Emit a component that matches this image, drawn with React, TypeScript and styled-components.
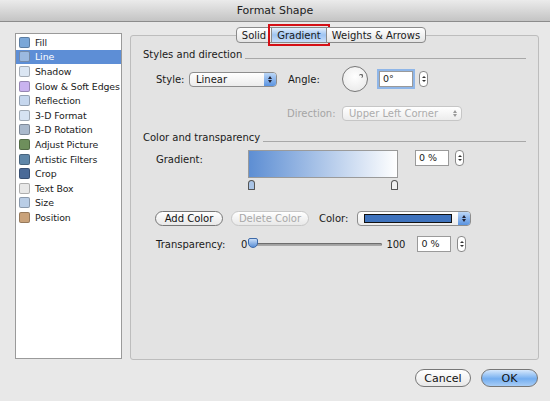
import React from "react";
import styled, { createGlobalStyle } from "styled-components";

const Global = createGlobalStyle`
  html, body { margin: 0; padding: 0; }
  body { width: 550px; height: 401px; overflow: hidden; background: #e8e8e8;
    font-family: "DejaVu Sans", "Liberation Sans", sans-serif; font-size: 10px; color: #1a1a1a; }
`;

const Window = styled.div`
  width: 550px; height: 401px; display: flex; flex-direction: column; background: #e8e8e8;
`;
const TitleBar = styled.div`
  height: 21px; flex: none; display: flex; align-items: center; justify-content: center;
  background: linear-gradient(#ebebeb, #c4c4c4); border-bottom: 1px solid #8c8c8c;
  font-size: 11px; color: #222;
`;
const Body = styled.div`
  display: flex; gap: 8px; padding: 11px 11px 0 15px; height: 327px;
`;
const Sidebar = styled.div`
  width: 107px; height: 326px; background: #fff; border: 1px solid #9a9a9a; padding-top: 1px;
  box-sizing: border-box; overflow: hidden;
`;
const Item = styled.div<{ $sel?: boolean }>`
  height: 14.6px; display: flex; align-items: center; gap: 5px; padding-left: 3px;
  font-size: 9.4px; letter-spacing: -0.1px;
  background: ${(p) => (p.$sel ? "#5d8ed6" : "transparent")};
  color: ${(p) => (p.$sel ? "#fff" : "#1a1a1a")}; white-space: nowrap;
`;
const Icon = styled.span<{ $c: string }>`
  width: 11px; height: 11px; flex: none; border-radius: 2px; background: ${(p) => p.$c};
  border: 1px solid rgba(0,0,0,0.25); box-sizing: border-box;
`;
const Right = styled.div`
  flex: 1; position: relative; padding-top: 1px;
`;
const Tabs = styled.div`
  position: absolute; top: -6px; left: 0; right: 0; display: flex; justify-content: center; z-index: 1;
  padding-right: 6px;
`;
const Tab = styled.div<{ $sel?: boolean }>`
  height: 14px; padding: 0 5px; display: flex; align-items: center;
  border: 1px solid #8a8a8a; margin-left: -1px;
  background: ${(p) => (p.$sel ? "linear-gradient(#e4effc, #9ec4f2 50%, #c9defa)" : "linear-gradient(#fff, #e4e4e4)")};
  outline: ${(p) => (p.$sel ? "2px solid #d40f16" : "none")};
  outline-offset: 1px;
  &:first-child { border-radius: 4px 0 0 4px; }
  &:last-child { border-radius: 0 4px 4px 0; }
`;
const Panel = styled.div`
  height: 325px; background: #e3e3e3; border: 1px solid #bdbdbd; border-radius: 3px;
  box-sizing: border-box; padding: 12px 12px 0 12px; margin-top: 1px;
`;
const Section = styled.div`
  display: flex; align-items: center; gap: 3px; height: 12px;
  &::after { content: ""; flex: 1; border-bottom: 1px solid #a8a8a8; margin-top: 8px; }
`;
const Row = styled.div<{ $h: number; $pl?: number }>`
  display: flex; align-items: center; height: ${(p) => p.$h}px; padding-left: ${(p) => p.$pl ?? 13}px;
`;
const Label = styled.span<{ $w?: number; $dim?: boolean }>`
  width: ${(p) => (p.$w ? p.$w + "px" : "auto")}; color: ${(p) => (p.$dim ? "#a5a5a5" : "#1a1a1a")};
  flex: none;
`;
const Select = styled.div<{ $w: number; $dim?: boolean }>`
  width: ${(p) => p.$w}px; height: 15px; box-sizing: border-box; border: 1px solid ${(p) => p.$dim ? "#c6c6c6" : "#8d8d8d"};
  border-radius: 4px; background: linear-gradient(#fff, #ececec); display: flex; align-items: center;
  padding-left: 6px; color: ${(p) => (p.$dim ? "#acacac" : "#1a1a1a")}; position: relative; flex: none;
`;
const Arrows = styled.span<{ $dim?: boolean }>`
  position: absolute; right: 0; top: 0; bottom: 0; width: 12px; border-radius: 0 3px 3px 0;
  background: ${(p) => (p.$dim ? "transparent" : "linear-gradient(#bcd7f7, #5a93e0)")};
  display: flex; flex-direction: column; align-items: center; justify-content: center; gap: 1px;
  &::before, &::after { content: ""; border-left: 2.5px solid transparent; border-right: 2.5px solid transparent; }
  &::before { border-bottom: 3px solid ${(p) => (p.$dim ? "#999" : "#223")}; }
  &::after { border-top: 3px solid ${(p) => (p.$dim ? "#999" : "#223")}; }
`;
const Field = styled.div<{ $focus?: boolean }>`
  width: 34px; height: 16px; box-sizing: border-box; background: #fff; flex: none;
  border: 1px solid #9a9a9a; padding: 1px 3px; font-size: 9.5px;
  box-shadow: ${(p) => (p.$focus ? "0 0 0 2px #8fb6e8" : "none")};
`;
const Stepper = styled.div`
  width: 7px; height: 14px; border: 1px solid #8a8a8a; border-radius: 4px; background: #fff;
  margin-left: 6px; display: flex; flex-direction: column; align-items: center; justify-content: center; gap: 2px;
  &::before, &::after { content: ""; border-left: 2px solid transparent; border-right: 2px solid transparent; }
  &::before { border-bottom: 2px solid #333; }
  &::after { border-top: 2px solid #333; }
`;
const Dial = styled.div`
  width: 24px; height: 24px; border-radius: 50%; border: 1px solid #777; flex: none;
  background: radial-gradient(circle at 50% 40%, #fff, #e6e6e6); position: relative;
  &::after { content: ""; position: absolute; right: 4px; top: 7px; width: 3px; height: 3px; border-radius: 50%; border: 1px solid #555; border-width: 1px 1px 0 0; }
`;
const GradBox = styled.div`
  width: 150px; height: 28px; box-sizing: border-box; border: 1px solid #9a9a9a;
  background: linear-gradient(90deg, #5d8ed3, #ffffff); flex: none;
`;
const Stop = styled.div<{ $fill: string }>`
  width: 7px; height: 10px; border: 1px solid #555; border-radius: 4px 4px 1px 1px;
  background: ${(p) => p.$fill}; box-sizing: border-box;
`;
const Pill = styled.div<{ $w: number; $dim?: boolean; $blue?: boolean }>`
  width: ${(p) => p.$w}px; height: 15px; box-sizing: border-box; border-radius: 8px; flex: none;
  border: 1px solid ${(p) => (p.$dim ? "#c8c8c8" : "#777")}; display: flex; align-items: center; justify-content: center;
  color: ${(p) => (p.$dim ? "#a8a8a8" : "#111")};
  background: ${(p) => (p.$blue ? "linear-gradient(#d6e8fc, #74aef0 55%, #a8cdf6)" : "linear-gradient(#fff, #e8e8e8)")};
`;
const Swatch = styled.span`
  position: absolute; left: 6px; right: 18px; top: 2px; bottom: 2px; background: #3f73bd; border: 1px solid #111;
`;
const Track = styled.div`
  width: 132px; height: 3px; background: #a8a8a8; border-radius: 2px; margin: 0 4px 0 3px; position: relative;
  box-shadow: inset 0 1px 1px #666;
`;
const Thumb = styled.span`
  position: absolute; left: -2px; top: -5px; width: 10px; height: 10px; box-sizing: border-box;
  background: linear-gradient(#c9def8, #5a8fd6); border: 1px solid #3e6aa8; border-radius: 2px 2px 50% 50%;
`;
const Footer = styled.div`
  display: flex; justify-content: flex-end; gap: 10px; padding: 9px 12px 0 0;
`;

const items: [string, string][] = [
  ["Fill", "#7aa7d8"], ["Line", "#9bb9e0"], ["Shadow", "#dbe6f3"], ["Glow & Soft Edges", "#c9b3ef"],
  ["Reflection", "#c6d7ee"], ["3-D Format", "#d5e2f2"], ["3-D Rotation", "#aab9cc"], ["Adjust Picture", "#6e8f5c"],
  ["Artistic Filters", "#5f86a8"], ["Crop", "#4a6a98"], ["Text Box", "#e8e8e8"], ["Size", "#b9cde6"], ["Position", "#c9a27a"],
];

export default function App() {
  return (
    <Window>
      <Global />
      <TitleBar>Format Shape</TitleBar>
      <Body>
        <Sidebar>
          {items.map(([n, c]) => (
            <Item key={n} $sel={n === "Line"}><Icon $c={c} />{n}</Item>
          ))}
        </Sidebar>
        <Right>
          <Tabs>
            <Tab>Solid</Tab><Tab $sel>Gradient</Tab><Tab>Weights &amp; Arrows</Tab>
          </Tabs>
          <Panel>
            <Section>Styles and direction</Section>
            <Row $h={30} style={{ marginTop: 4 }}>
              <Label $w={33}>Style:</Label>
              <Select $w={88}>Linear<Arrows /></Select>
              <Label style={{ marginLeft: 11 }} $w={54}>Angle:</Label>
              <Dial />
              <Field $focus style={{ marginLeft: 11 }}>0°</Field>
              <Stepper />
            </Row>
            <Row $h={34} style={{ marginTop: 2 }} $pl={144}>
              <Label $dim $w={55}>Direction:</Label>
              <Select $w={120} $dim>Upper Left Corner<Arrows $dim /></Select>
            </Row>
            <Section style={{ marginTop: 1 }}>Color and transparency</Section>
            <Row $h={30} style={{ alignItems: "flex-start", marginTop: 7 }}>
              <Label $w={92} style={{ marginTop: 4 }}>Gradient:</Label>
              <div>
                <GradBox />
                <div style={{ display: "flex", justifyContent: "space-between", marginTop: 2 }}>
                  <Stop $fill="#a9c4e6" /><Stop $fill="#f0f0f0" />
                </div>
              </div>
              <Field style={{ marginLeft: 17 }}>0 %</Field>
              <Stepper />
            </Row>
            <Row $h={28} style={{ marginTop: 24 }} $pl={12}>
              <Pill $w={68}>Add Color</Pill>
              <Pill $w={78} $dim style={{ marginLeft: 8 }}>Delete Color</Pill>
              <Label $w={38} style={{ marginLeft: 10 }}>Color:</Label>
              <Select $w={114}><Swatch /><Arrows /></Select>
            </Row>
            <Row $h={24}>
              <Label $w={85}>Transparency:</Label>
              <Label>0</Label>
              <Track><Thumb /></Track>
              <Label>100</Label>
              <Field style={{ marginLeft: 12 }}>0 %</Field>
              <Stepper />
            </Row>
          </Panel>
        </Right>
      </Body>
      <Footer>
        <Pill $w={56} style={{ height: 18, borderRadius: 9, fontSize: 11 }}>Cancel</Pill>
        <Pill $w={57} $blue style={{ height: 18, borderRadius: 9, fontSize: 11 }}>OK</Pill>
      </Footer>
    </Window>
  );
}
